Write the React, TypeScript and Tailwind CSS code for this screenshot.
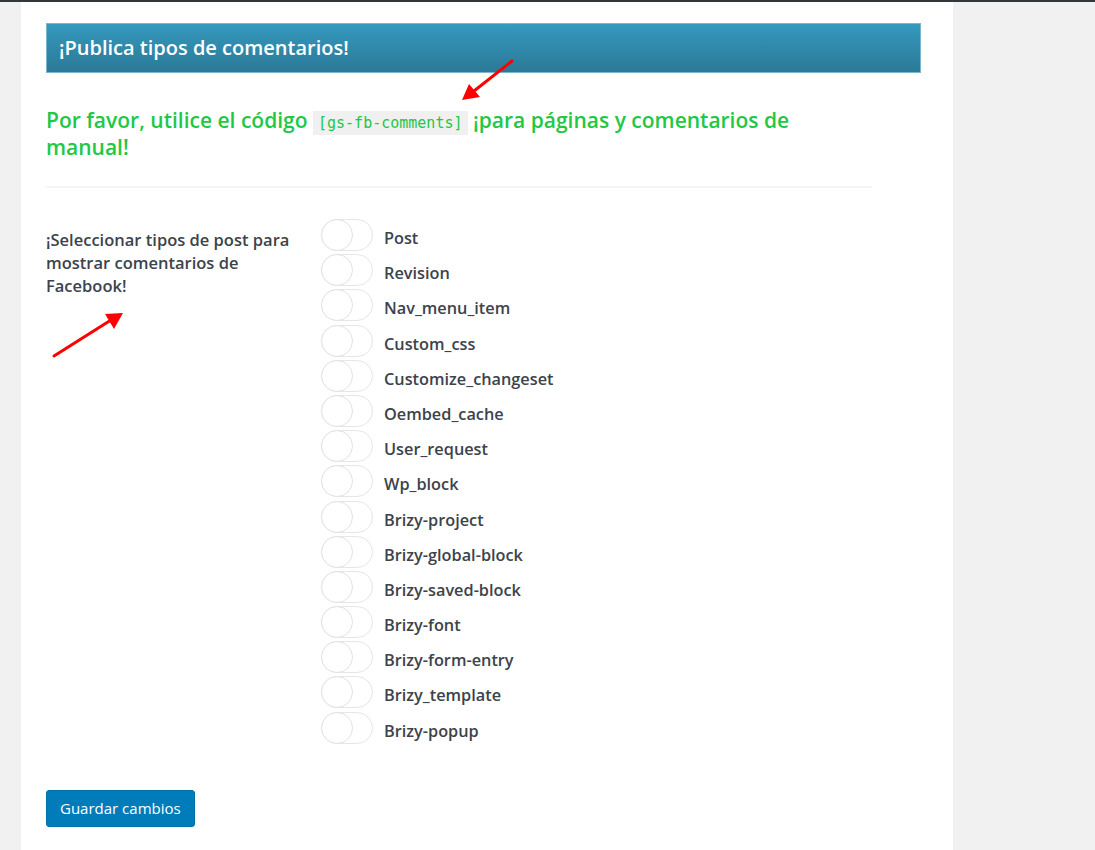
import React from "react";

const types = [
  "Post",
  "Revision",
  "Nav_menu_item",
  "Custom_css",
  "Customize_changeset",
  "Oembed_cache",
  "User_request",
  "Wp_block",
  "Brizy-project",
  "Brizy-global-block",
  "Brizy-saved-block",
  "Brizy-font",
  "Brizy-form-entry",
  "Brizy_template",
  "Brizy-popup",
];

function Toggle() {
  return (
    <div className="relative w-[52px] h-[32px] rounded-full border border-[#e6e6e6] bg-white shrink-0">
      <div className="absolute left-[-1px] top-[-1px] w-[32px] h-[32px] rounded-full border border-[#e2e2e2] bg-white" />
    </div>
  );
}

export default function App() {
  return (
    <div
      className="relative min-h-[850px] bg-[#f1f1f1] border-t-2 border-[#32373c]"
      style={{ fontFamily: '"Open Sans", "Noto Sans", sans-serif' }}
    >
      <div className="flex">
        <div className="w-[21px] shrink-0" />
        <div className="w-[932px] bg-white min-h-[848px] pl-[25px] pt-[21px]">
          <div className="w-[875px] h-[50px] bg-gradient-to-b from-[#3599be] to-[#2b7997] border border-[#7bb6cf] flex items-center pl-[12px]">
            <span className="text-white text-[20px] font-semibold">
              ¡Publica tipos de comentarios!
            </span>
          </div>

          <p className="mt-[34px] w-[826px] text-[21px] leading-[27px] font-semibold text-[#22c845]">
            Por favor, utilice el código{" "}
            <code
              className="bg-[#f0f0f0] px-[5px] py-[3px] text-[15px] leading-[18px] font-normal text-[#22c845]"
              style={{ fontFamily: '"DejaVu Sans Mono", monospace' }}
            >
              [gs-fb-comments]
            </code>{" "}
            ¡para páginas y comentarios de manual!
          </p>

          <div className="mt-[25px] w-[826px] h-[2px] bg-[#f5f5f5]" />

          <div className="mt-[31px] flex">
            <div className="w-[275px] shrink-0 pt-[9px] pr-[20px] text-[16.5px] leading-[23px] font-semibold text-[#3c434a]">
              ¡Seleccionar tipos de post para mostrar comentarios de Facebook!
            </div>
            <div className="flex flex-col">
              {types.map((t) => (
                <div key={t} className="h-[35.2px] flex items-start">
                  <Toggle />
                  <span className="ml-[11px] mt-[8px] text-[16.3px] leading-[22px] font-semibold text-[#3c434a]">
                    {t}
                  </span>
                </div>
              ))}
            </div>
          </div>

          <button className="mt-[43px] h-[37px] px-[13px] rounded-[3px] bg-[#007cba] text-white text-[15px] border border-[#0071a8]">
            Guardar cambios
          </button>
        </div>
        <div className="flex-1" />
      </div>

      <svg
        className="absolute left-0 top-0 pointer-events-none"
        width="1095"
        height="850"
        viewBox="0 0 1095 850"
      >
        <line x1="512" y1="59" x2="474" y2="89" stroke="#ff0000" strokeWidth="3" strokeLinecap="round" />
        <polygon points="462,98 469,82 480,95" fill="#ff0000" />
        <line x1="54" y1="354" x2="111" y2="318" stroke="#ff0000" strokeWidth="3" strokeLinecap="round" />
        <polygon points="123,311 105,312 114,327" fill="#ff0000" />
      </svg>
    </div>
  );
}
